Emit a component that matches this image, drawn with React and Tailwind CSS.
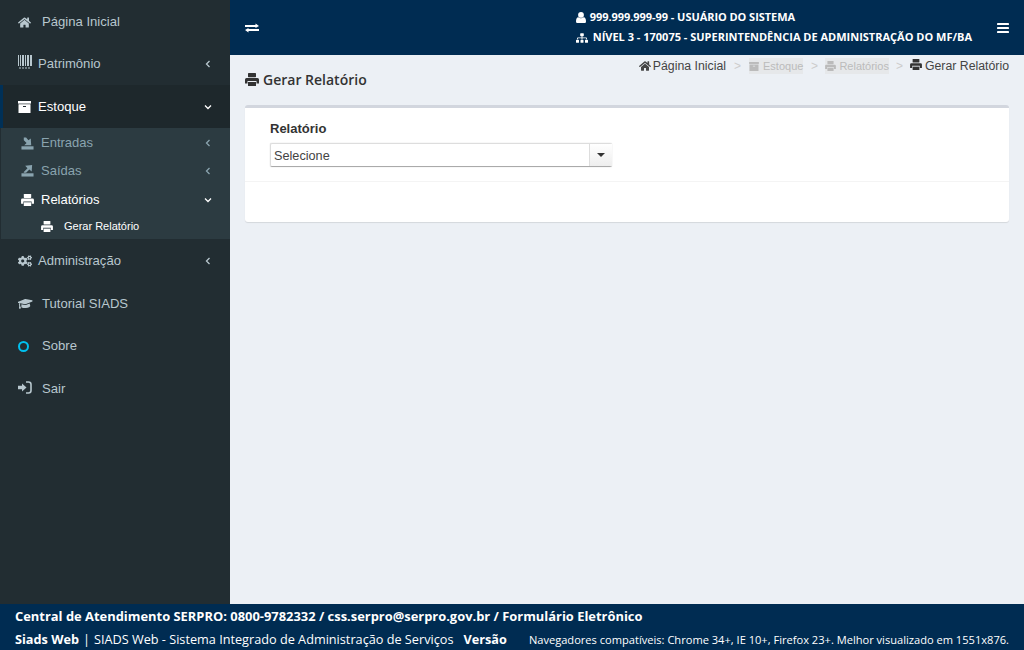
import { FaHome, FaCogs, FaGraduationCap, FaSitemap } from "react-icons/fa";

const sans = "font-['Liberation_Sans',Arial,sans-serif]";
const open = "font-['Open_Sans',sans-serif]";

const TrayIcon = ({ up }) => (
  <svg viewBox="0 0 14 14" className="w-[13px] h-[13px] shrink-0" fill="currentColor">
    <rect x="0.5" y="10" width="13" height="3.5" />
    {up ? (
      <path d="M3 8.5 L7 4.500 L4.500 2 L12 1 L11.500 8 L9 6 L5.500 9.500 L3 9.500 Z" />
    ) : (
      <path d="M3 0.5 L5.500 0.500 L8 3.500 L10.500 1.500 L11 9 L3.500 9 L6 6.500 L3 3.500 Z" />
    )}
  </svg>
);

const PrintIcon = ({ className }) => (
  <svg viewBox="0 0 14 13" className={className} fill="currentColor">
    <rect x="3" y="0" width="8" height="4.2" rx="0.6" />
    <path d="M1.500 5 H12.500 Q14 5 14 6.500 V10.500 H11.500 V8 H2.500 V10.500 H0 V6.500 Q0 5 1.500 5 Z" />
    <rect x="3" y="9" width="8" height="4" />
  </svg>
);

const ArchiveIcon = ({ className }) => (
  <svg viewBox="0 0 13 12" className={className} fill="currentColor">
    <rect x="0" y="0" width="13" height="2.600" />
    <path fillRule="evenodd" d="M0.500 3.300 H12.500 V12 H0.500 Z M5 5 V6 H8 V5 Z" />
  </svg>
);

const BarcodeIcon = ({ className }) => (
  <svg viewBox="0 0 14 14" className={className} fill="currentColor">
    <rect x="0" y="0" width="1" height="11" />
    <rect x="2" y="0" width="1" height="11" />
    <rect x="4" y="0" width="2" height="11" />
    <rect x="7" y="0" width="1" height="11" />
    <rect x="9" y="0" width="2" height="11" />
    <rect x="12" y="0" width="2" height="11" />
    <rect x="1" y="12.500" width="2" height="1" />
    <rect x="4" y="12.500" width="2" height="1" />
    <rect x="7" y="12.500" width="2" height="1" />
    <rect x="10" y="12.500" width="2" height="1" />
  </svg>
);

const SignInIcon = ({ className }) => (
  <svg viewBox="0 0 14 13" className={className}>
    <path d="M0 4.800 H4 V2.500 L8.500 6.500 L4 10.500 V8.200 H0 Z" fill="currentColor" />
    <path d="M8 1 H10.500 Q13 1 13 3.500 V9.500 Q13 12 10.500 12 H8" fill="none" stroke="currentColor" strokeWidth="1.600" />
  </svg>
);

const UserIcon = ({ className }) => (
  <svg viewBox="0 0 10 11" className={className} fill="currentColor">
    <circle cx="5" cy="2.900" r="2.900" />
    <path d="M0 9.500 Q0 5.500 2.300 5.300 Q5 7.300 7.700 5.300 Q10 5.500 10 9.500 Q10 11 8.800 11 H1.200 Q0 11 0 9.500 Z" />
  </svg>
);

const BarsIcon = ({ className }) => (
  <svg viewBox="0 0 12 10" className={className} fill="currentColor">
    <rect x="0" y="0" width="12" height="2" rx="0.400" />
    <rect x="0" y="4" width="12" height="2" rx="0.400" />
    <rect x="0" y="8" width="12" height="2" rx="0.400" />
  </svg>
);

const ExchangeIcon = ({ className }) => (
  <svg viewBox="0 0 14 10" className={className} fill="currentColor">
    <path d="M0 2 H10.500 V0.500 L14 3 L10.500 5 V4 H0 Z" />
    <path d="M14 6 H3.500 V5 L0 7 L3.500 9.500 V8 H14 Z" />
  </svg>
);

const Chevron = ({ dir }) => (
  <svg viewBox="0 0 8 8" className="w-[8px] h-[8px] shrink-0" fill="none" stroke="currentColor" strokeWidth="1.300">
    {dir === "left" ? <path d="M5.500 1 L2.500 4 L5.500 7" /> : <path d="M1 2.500 L4 5.500 L7 2.500" />}
  </svg>
);

const TopItem = ({ icon, label, chevron, textGap = "w-[24px]", active, nudge, h = "h-[42.5px]" }) => (
  <div className={`flex items-center ${h} ${nudge ? "pt-[2px]" : ""} pl-[18px] pr-[18px] text-[13.1px] ${active ? "text-white bg-[#1e282c]" : "text-[#b8c7ce]"} relative`}>
    {active && <span className="absolute left-0 top-0 bottom-0 w-[3px] bg-[#003057]" />}
    <span className={`flex items-center shrink-0 ${textGap}`}>{icon}</span>
    <span className="flex-1">{label}</span>
    {chevron && <Chevron dir={chevron} />}
  </div>
);

const SubItem = ({ icon, label, chevron, active, nudge, h }) => (
  <div className={`flex items-center ${h} ${nudge ? "pt-[2px]" : ""} pl-[20px] pr-[18px] text-[13px] ${active ? "text-white" : "text-[#8aa4af]"}`}>
    <span className="flex items-center shrink-0 w-[20px]">{icon}</span>
    <span className="flex-1">{label}</span>
    {chevron && <Chevron dir={chevron} />}
  </div>
);

const Sidebar = () => (
  <aside className={`w-[230px] shrink-0 bg-[#222d32] ${sans}`}>
    <TopItem nudge icon={<FaHome className="text-[13px]" />} label="Página Inicial" />
    <TopItem icon={<BarcodeIcon className="w-[14px] h-[14px] -mt-[3px]" />} label="Patrimônio" chevron="left" textGap="w-[20px]" />
    <TopItem icon={<ArchiveIcon className="w-[13px] h-[12px]" />} label="Estoque" chevron="down" textGap="w-[20px]" active h="h-[43px]" />
    <div className="bg-[#2c3b41] ml-px h-[111px]">
      <SubItem nudge icon={<TrayIcon />} label="Entradas" chevron="left" h="h-[28px]" />
      <SubItem icon={<TrayIcon up />} label="Saídas" chevron="left" h="h-[29px]" />
      <SubItem nudge icon={<PrintIcon className="w-[13px] h-[12px]" />} label="Relatórios" chevron="down" active h="h-[28px]" />
      <div className="flex items-center h-[26px] pl-[40px] text-[11px] text-white">
        <span className="flex items-center w-[23px]"><PrintIcon className="w-[12px] h-[11px]" /></span>
        Gerar Relatório
      </div>
    </div>
    <TopItem nudge icon={<FaCogs className="text-[14px]" />} label="Administração" chevron="left" textGap="w-[20px]" />
    <TopItem nudge icon={<FaGraduationCap className="text-[15px] -rotate-6" />} label="Tutorial SIADS" />
    <TopItem nudge icon={<span className="block w-[11px] h-[11px] rounded-full border-2 border-[#00c0ef]" />} label="Sobre" />
    <TopItem nudge icon={<SignInIcon className="w-[14px] h-[13px] -mt-[2px]" />} label="Sair" />
  </aside>
);

const Header = () => (
  <header className={`h-[55px] shrink-0 bg-[#002c52] text-white flex items-center ${open}`}>
    <ExchangeIcon className="ml-[15px] w-[14px] h-[10px]" />
    <div className="ml-auto text-[11px] font-bold">
      <div className="flex items-center gap-[4px] h-[20px]">
        <UserIcon className="w-[10px] h-[11px]" />
        <span className="tracking-[-0.05px]">999.999.999-99 - USUÁRIO DO SISTEMA</span>
      </div>
      <div className="flex items-center gap-[5px] h-[20px]">
        <FaSitemap className="text-[12px]" />
        <span>NÍVEL 3 - 170075 - SUPERINTENDÊNCIA DE ADMINISTRAÇÃO DO MF/BA</span>
      </div>
    </div>
    <BarsIcon className="ml-[25px] mr-[15px] w-[12px] h-[10px]" />
  </header>
);

const Sep = ({ className = "mx-[8px]" }) => <span className={`text-[#ccc] text-[12px] ${className}`}>&gt;</span>;

const Content = () => (
  <main className="flex-1 bg-[#ecf0f5] px-[15px] min-h-0">
    <div className="flex justify-between h-[50px]">
      <h1 className={`${open} font-semibold text-[14px] text-[#333] flex items-center gap-[4px] h-[49px]`}>
        <PrintIcon className="w-[14px] h-[13px]" />
        Gerar Relatório
      </h1>
      <div className={`${sans} text-[12.3px] text-[#444] flex items-center h-[22px]`}>
        <FaHome className="text-[12px] mr-[2px]" />
        Página Inicial
        <Sep />
        <span className="flex items-center text-[#bbb] text-[11px] bg-[#e6e8ea]"><ArchiveIcon className="w-[10px] h-[9px] mr-[4px]" />Estoque</span>
        <Sep className="mx-[7.5px]" />
        <span className="flex items-center text-[#bbb] text-[11px] bg-[#e6e8ea]"><PrintIcon className="w-[11px] h-[10px] mr-[3px]" />Relatórios</span>
        <Sep className="mx-[7px]" />
        <PrintIcon className="w-[12px] h-[11px] mr-[3px] -mt-[3px] text-[#333]" />
        Gerar Relatório
      </div>
    </div>
    <section className="h-[117px] bg-white rounded-[3px] border-t-[3px] border-[#d2d6de] shadow-[0_1px_1px_rgba(0,0,0,0.1)]">
      <div className="h-[74px] border-b border-[#f4f4f4] pl-[25px] pt-[13px]">
        <label className={`${sans} block text-[13px] font-bold text-[#333] leading-[16px]`}>Relatório</label>
        <div className={`${sans} mt-[6px] w-[342px] h-[24px] flex items-center rounded-[2px] border-t border-l border-[#ddd] border-b border-b-[#aaa] shadow-[0_0_1px_rgba(0,0,0,0.3)]`}>
          <span className="flex-1 pl-[3px] pt-[4px] text-[12.7px] text-[#444]">Selecione</span>
          <span className="w-[23px] h-full flex items-center justify-center bg-gradient-to-b from-white to-[#eee] border-l border-[#ddd]">
            <span className="block w-0 h-0 border-x-[4px] border-x-transparent border-t-[4px] border-t-[#333]" />
          </span>
        </div>
      </div>
    </section>
  </main>
);

const Footer = () => (
  <footer className={`h-[46px] shrink-0 bg-[#002c52] text-white px-[15px] ${open}`}>
    <div className="h-[26px] flex items-center text-[12.92px] font-bold">
      Central de Atendimento SERPRO: 0800-9782332 / css.serpro@serpro.gov.br / Formulário Eletrônico
    </div>
    <div className="h-[20px] flex items-center text-[12.7px]">
      <b>Siads Web</b>
      <span className="mx-[4px]">|</span>
      <span>SIADS Web - Sistema Integrado de Administração de Serviços</span>
      <b className="ml-[10px]">Versão</b>
      <span className="ml-auto text-[11.1px]">Navegadores compatíveis: Chrome 34+, IE 10+, Firefox 23+. Melhor visualizado em 1551x876.</span>
    </div>
  </footer>
);

export default function App() {
  return (
    <div className="w-[1024px] h-[650px] flex flex-col overflow-hidden">
      <div className="flex flex-1 min-h-0">
        <Sidebar />
        <div className="flex-1 flex flex-col min-w-0">
          <Header />
          <Content />
        </div>
      </div>
      <Footer />
    </div>
  );
}
